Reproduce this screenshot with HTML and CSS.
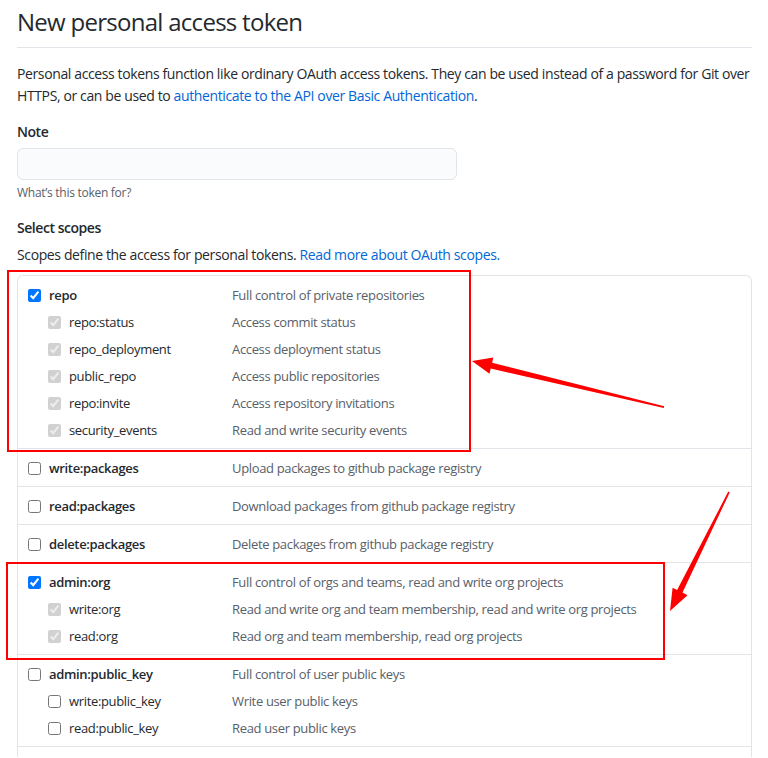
FILE: index.html
```html
<!DOCTYPE html>
<html lang="en">
<head>
<meta charset="utf-8">
<title>New personal access token</title>
<link rel="stylesheet" href="styles.css">
</head>
<body>
<div class="page">
  <h1 class="title">New personal access token</h1>
  <p class="intro">Personal access tokens function like ordinary OAuth access tokens. They can be used instead of a password for Git over HTTPS, or can be used to <a href="#">authenticate to the API over Basic Authentication</a>.</p>

  <div class="label note-label">Note</div>
  <div class="note-input"></div>
  <p class="hint">What’s this token for?</p>

  <div class="label scopes-label">Select scopes</div>
  <p class="scopes-desc">Scopes define the access for personal tokens. <a href="#">Read more about OAuth scopes.</a></p>

  <div class="scopes">
    <div class="group">
      <div class="row"><span class="name"><input type="checkbox" checked><b>repo</b></span><span class="desc">Full control of private repositories</span></div>
      <div class="row sub"><span class="name"><input type="checkbox" checked disabled>repo:status</span><span class="desc">Access commit status</span></div>
      <div class="row sub"><span class="name"><input type="checkbox" checked disabled>repo_deployment</span><span class="desc">Access deployment status</span></div>
      <div class="row sub"><span class="name"><input type="checkbox" checked disabled>public_repo</span><span class="desc">Access public repositories</span></div>
      <div class="row sub"><span class="name"><input type="checkbox" checked disabled>repo:invite</span><span class="desc">Access repository invitations</span></div>
      <div class="row sub"><span class="name"><input type="checkbox" checked disabled>security_events</span><span class="desc">Read and write security events</span></div>
    </div>
    <div class="group">
      <div class="row"><span class="name"><input type="checkbox"><b>write:packages</b></span><span class="desc">Upload packages to github package registry</span></div>
    </div>
    <div class="group">
      <div class="row"><span class="name"><input type="checkbox"><b>read:packages</b></span><span class="desc">Download packages from github package registry</span></div>
    </div>
    <div class="group">
      <div class="row"><span class="name"><input type="checkbox"><b>delete:packages</b></span><span class="desc">Delete packages from github package registry</span></div>
    </div>
    <div class="group">
      <div class="row"><span class="name"><input type="checkbox" checked><b>admin:org</b></span><span class="desc">Full control of orgs and teams, read and write org projects</span></div>
      <div class="row sub"><span class="name"><input type="checkbox" checked disabled>write:org</span><span class="desc">Read and write org and team membership, read and write org projects</span></div>
      <div class="row sub"><span class="name"><input type="checkbox" checked disabled>read:org</span><span class="desc">Read org and team membership, read org projects</span></div>
    </div>
    <div class="group">
      <div class="row"><span class="name"><input type="checkbox"><b>admin:public_key</b></span><span class="desc">Full control of user public keys</span></div>
      <div class="row sub"><span class="name"><input type="checkbox">write:public_key</span><span class="desc">Write user public keys</span></div>
      <div class="row sub"><span class="name"><input type="checkbox">read:public_key</span><span class="desc">Read user public keys</span></div>
    </div>
    <div class="group group-more"></div>
  </div>
</div>

<div class="annotation annotation-box-1"></div>
<div class="annotation annotation-box-2"></div>
<svg class="arrows" width="768" height="758" viewBox="0 0 768 758">
  <polygon fill="#ff0000" points="472,361 493.3,357.6 492.1,362.8 664.2,406.2 663.8,408 490.7,368.6 489.5,373.8"/>
  <polygon fill="#ff0000" points="670,611 672.6,587.7 677.1,590 728.3,491.6 729.7,492.4 682.5,592.6 687.5,595.2"/>
</svg>
</body>
</html>
```

FILE: styles.css
```css
html, body {
  margin: 0;
  padding: 0;
  background: #ffffff;
}

body {
  position: relative;
  width: 768px;
  height: 758px;
  overflow: hidden;
  font-family: "Open Sans", "Noto Sans", sans-serif;
  font-size: 14px;
  letter-spacing: -0.027em;
  color: #24292e;
}

.page {
  padding: 0 16px 0 17px;
}

.title {
  margin: 7px 0 0;
  padding-bottom: 10px;
  border-bottom: 1px solid #e1e4e8;
  font-size: 24px;
  font-weight: 400;
  line-height: 30px;
  letter-spacing: -0.03em;
}

.intro {
  margin: 15px 0 0;
  line-height: 22px;
}

a {
  color: #0366d6;
  text-decoration: none;
}

.label {
  font-weight: 600;
  line-height: 21px;
  letter-spacing: -0.033em;
}

.note-label {
  margin-top: 14px;
}

.note-input {
  margin-top: 6px;
  width: 438px;
  height: 30px;
  background: #fafbfc;
  border: 1px solid #e1e4e8;
  border-radius: 6px;
}

.hint {
  margin: 4px 0 0;
  font-size: 12px;
  line-height: 18px;
  color: #586069;
  letter-spacing: -0.023em;
}

.scopes-label {
  margin-top: 15px;
}

.scopes-desc {
  margin: 6px 0 0;
  line-height: 21px;
}

.scopes {
  margin-top: 10px;
  border: 1px solid #e1e4e8;
  border-bottom: none;
  border-radius: 6px 6px 0 0;
  font-size: 13px;
  letter-spacing: -0.026em;
}

.group {
  padding: 9px 0 7px 10px;
}

.group + .group {
  border-top: 1px solid #e1e4e8;
}

.group-more {
  padding: 0;
  height: 10px;
}

.row {
  display: flex;
  align-items: center;
  height: 21px;
  line-height: 21px;
}

.row.sub {
  margin-top: 6px;
}

.name {
  display: flex;
  align-items: center;
  width: 204px;
  flex: none;
  color: #24292e;
}

.row.sub .name {
  padding-left: 20px;
  width: 184px;
}

.name b {
  font-weight: 600;
}

.name input {
  width: 13px;
  height: 13px;
  margin: 0 8px 0 0;
  flex: none;
}

.desc {
  color: #586069;
}

.annotation {
  position: absolute;
  border: 2px solid #ff0000;
  pointer-events: none;
}

.annotation-box-1 {
  left: 7px;
  top: 270px;
  width: 460px;
  height: 178px;
}

.annotation-box-2 {
  left: 6px;
  top: 562px;
  width: 655px;
  height: 94px;
}

.arrows {
  position: absolute;
  left: 0;
  top: 0;
  pointer-events: none;
}
```
